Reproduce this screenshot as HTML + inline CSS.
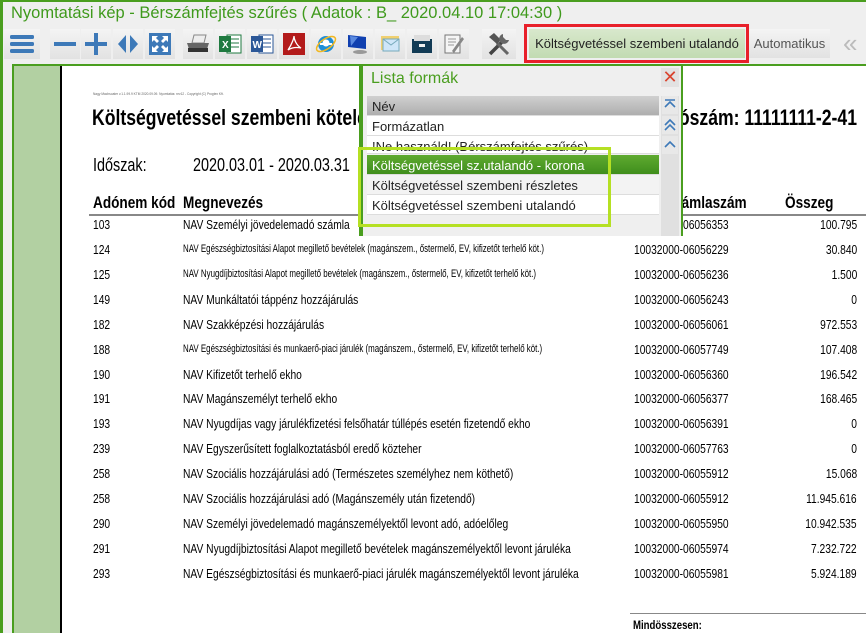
<!DOCTYPE html>
<html><head><meta charset="utf-8"><style>
*{margin:0;padding:0;box-sizing:border-box}
body{width:866px;height:633px;overflow:hidden;background:#efefef;font-family:"Liberation Sans",sans-serif;position:relative}
.abs{position:absolute}
.btn{position:absolute;top:29px;height:30px;width:30px;background:linear-gradient(#f4f4f4,#e2e2e2);display:flex;align-items:center;justify-content:center}
.n{transform:scaleX(.8);transform-origin:0 0;white-space:nowrap}
.nr{transform:scaleX(.8);transform-origin:100% 0;white-space:nowrap}
.row{position:absolute;left:0;width:866px;font-size:12.5px;color:#000;height:16px}
.row span{position:absolute;top:1px;white-space:nowrap;transform:scaleX(.82);transform-origin:0 0}
.c1{left:93px}.c2{left:183px}.c3{left:634px}
.row span.c4{right:9px;transform-origin:100% 0}
.row span.sm{font-size:11px;transform:scaleX(.72)}
.li{position:absolute;left:367px;width:292px;height:20px;font-size:13px;padding:3px 0 0 5px;color:#222;border-bottom:1px solid #ddd;background:#fff;white-space:nowrap}
</style></head><body>
<div class="abs" style="left:0;top:0;width:866px;height:2px;background:#4a9e1f"></div>
<div class="abs" style="left:0;top:0;width:3px;height:633px;background:#4a9e1f"></div>
<div class="abs" style="left:11px;top:4px;font-size:16.5px;color:#3f9a1c">Nyomtatási kép - Bérszámfejtés szűrés ( Adatok : B_ 2020.04.10 17:04:30 )</div>

<div class="btn" style="left:4px;width:36px"><svg width="24" height="20"><rect y="1" width="24" height="4" rx="1.5" fill="#3d79b8"/><rect y="8" width="24" height="4" rx="1.5" fill="#3d79b8"/><rect y="15" width="24" height="4" rx="1.5" fill="#3d79b8"/></svg></div>
<div class="btn" style="left:50px"><svg width="22" height="22"><rect y="9" width="22" height="4" fill="#3d79b8"/></svg></div>
<div class="btn" style="left:81px"><svg width="22" height="22"><rect y="9" width="22" height="4" fill="#3d79b8"/><rect x="9" width="4" height="22" fill="#3d79b8"/></svg></div>
<div class="btn" style="left:113px"><svg width="22" height="22"><path d="M9 2 L1 11 L9 20Z M13 2 L21 11 L13 20Z" fill="#3d79b8"/></svg></div>
<div class="btn" style="left:145px"><svg width="22" height="22"><rect width="22" height="22" fill="#3d79b8"/><path d="M3 3h6l-2 2 3 3-2 2-3-3-2 2z M19 3v6l-2-2-3 3-2-2 3-3-2-2z M3 19v-6l2 2 3-3 2 2-3 3 2 2z M19 19h-6l2-2-3-3 2-2 3 3 2-2z" fill="#fff"/></svg></div>
<div class="btn" style="left:183px"><svg width="24" height="20"><path d="M8 1 L20 1 L18 9 L6 9Z" fill="#eee" stroke="#888"/><path d="M1 9h22l-2 6H3z" fill="#666"/><rect x="2" y="14" width="20" height="4" fill="#333"/></svg></div>
<div class="btn" style="left:215px"><svg width="24" height="22"><rect x="9" y="2" width="14" height="18" fill="#fff" stroke="#1f7a40"/><path d="M12 6h9M12 10h9M12 14h9" stroke="#1f7a40"/><rect x="1" y="3" width="12" height="16" fill="#1f7a40"/><text x="4" y="15" font-size="10" fill="#fff" font-weight="bold">X</text></svg></div>
<div class="btn" style="left:247px"><svg width="24" height="22"><rect x="9" y="2" width="14" height="18" fill="#fff" stroke="#2b5797"/><path d="M12 6h9M12 10h9M12 14h9" stroke="#2b5797"/><rect x="1" y="3" width="12" height="16" fill="#2b5797"/><text x="2.5" y="15" font-size="10" fill="#fff" font-weight="bold">W</text></svg></div>
<div class="btn" style="left:279px"><svg width="22" height="22"><rect width="22" height="22" fill="#b31b1b"/><path d="M5 17 C9 11 11 5 11 3 C11 6 13 12 18 15 C13 14 8 15 5 17Z" fill="none" stroke="#fff" stroke-width="1.3"/></svg></div>
<div class="btn" style="left:311px"><svg width="24" height="24"><circle cx="12" cy="12" r="8" fill="#1f8fd8"/><circle cx="12" cy="11" r="3.5" fill="#fff"/><rect x="6" y="11" width="12" height="2" fill="#fff"/><ellipse cx="12" cy="12" rx="11" ry="5" fill="none" stroke="#f2b820" stroke-width="1.5" transform="rotate(-35 12 12)"/></svg></div>
<div class="btn" style="left:343px"><svg width="24" height="22"><path d="M2 2 L20 4 L20 16 L2 14Z" fill="#1040b0"/><path d="M4 3 L12 4 L5 13Z" fill="#5a8ae0"/><ellipse cx="14" cy="19" rx="7" ry="2" fill="#999"/></svg></div>
<div class="btn" style="left:375px"><svg width="24" height="22"><rect x="3" y="3" width="18" height="14" fill="#f0d070"/><rect x="5" y="6" width="16" height="12" fill="#cfe6f8" stroke="#7ab"/><path d="M5 6l8 6 8-6" fill="none" stroke="#7ab"/></svg></div>
<div class="btn" style="left:407px"><svg width="24" height="22"><path d="M2 6h20v14H2z" fill="#123b55"/><path d="M4 2h16v6H4z" fill="#ddd"/><rect x="9" y="11" width="6" height="3" fill="#eee"/></svg></div>
<div class="btn" style="left:439px"><svg width="22" height="22"><rect x="2" y="2" width="15" height="18" fill="#f5f5f5" stroke="#777"/><path d="M5 6h8M5 9h8M5 12h6" stroke="#999"/><path d="M9 18 L19 4 L21 6 L11 20Z" fill="#888"/></svg></div>
<div class="btn" style="left:482px;width:34px"><svg width="26" height="26"><path d="M4 23 L16 11" stroke="#444" stroke-width="3.5"/><path d="M22 23 L11 12" stroke="#666" stroke-width="3"/><path d="M3 6l5-4 7 7-4 4z" fill="#555"/><path d="M17 3a5 5 0 1 0 6 6l-3 0-3-3z" fill="#666"/></svg></div>

<div class="abs" style="left:524px;top:24px;width:225px;height:39px;border:3px solid #e8202a"></div>
<div class="abs" style="left:529px;top:29px;width:216px;height:29px;background:linear-gradient(#d8e8cc,#c2dbb2);font-size:13px;color:#222;padding-top:7px;text-align:center">Költségvetéssel szembeni utalandó</div>
<div class="abs" style="left:749px;top:29px;width:81px;height:29px;background:linear-gradient(#f4f4f4,#e2e2e2);font-size:13px;color:#555;padding-top:7px;text-align:center">Automatikus</div>
<div class="abs" style="left:843px;top:28px;font-size:26px;color:#bbb;line-height:30px;letter-spacing:-6px">«</div>

<div class="abs" style="left:12px;top:64px;width:854px;height:2px;background:#4a9e1f"></div>
<div class="abs" style="left:12px;top:64px;width:2px;height:569px;background:#4a9e1f"></div>
<div class="abs" style="left:14px;top:66px;width:46px;height:567px;background:#b2d0a2"></div>
<div class="abs" style="left:60px;top:66px;width:2px;height:567px;background:#000"></div>
<div class="abs" style="left:62px;top:66px;width:804px;height:567px;background:#fff"></div>

<div class="abs n" style="left:93px;top:91px;font-size:4px;color:#666">Nagy Machsoater v.1.1.99.9 KTM 2020.09.09. Nyomtatás: rev12 - Copyright (C) Progtex Kft.</div>
<div class="abs n" style="left:92px;top:105px;font-size:22px;font-weight:bold;color:#000">Költségvetéssel szembeni kötelezettségek</div>
<div class="abs nr" style="right:9px;top:105px;font-size:22px;font-weight:bold;color:#000">Adószám: 11111111-2-41</div>
<div class="abs n" style="left:93px;top:155px;font-size:18px;color:#000">Időszak:</div>
<div class="abs n" style="left:193px;top:155px;font-size:18px;color:#000">2020.03.01 - 2020.03.31</div>
<div class="abs n" style="left:93px;top:193px;font-size:17px;font-weight:bold">Adónem kód</div>
<div class="abs n" style="left:183px;top:193px;font-size:17px;font-weight:bold">Megnevezés</div>
<div class="abs n" style="left:634px;top:193px;font-size:17px;font-weight:bold">Bankszámlaszám</div>
<div class="abs n" style="left:785px;top:193px;font-size:17px;font-weight:bold">Összeg</div>
<div class="abs" style="left:89px;top:214px;width:777px;height:2px;background:#888"></div>

<div>
<div class="row" style="top:217px"><span class="c1">103</span><span class="c2">NAV Személyi jövedelemadó számla</span><span class="c3">10032000-06056353</span><span class="c4">100.795</span></div>
<div class="row" style="top:242px"><span class="c1">124</span><span class="c2 sm">NAV Egészségbiztosítási Alapot megillető bevételek (magánszem., őstermelő, EV, kifizetőt terhelő köt.)</span><span class="c3">10032000-06056229</span><span class="c4">30.840</span></div>
<div class="row" style="top:267px"><span class="c1">125</span><span class="c2 sm">NAV Nyugdíjbiztosítási Alapot megillető bevételek (magánszem., őstermelő, EV, kifizetőt terhelő köt.)</span><span class="c3">10032000-06056236</span><span class="c4">1.500</span></div>
<div class="row" style="top:292px"><span class="c1">149</span><span class="c2">NAV Munkáltatói táppénz hozzájárulás</span><span class="c3">10032000-06056243</span><span class="c4">0</span></div>
<div class="row" style="top:317px"><span class="c1">182</span><span class="c2">NAV Szakképzési hozzájárulás</span><span class="c3">10032000-06056061</span><span class="c4">972.553</span></div>
<div class="row" style="top:342px"><span class="c1">188</span><span class="c2 sm">NAV Egészségbiztosítási és munkaerő-piaci járulék (magánszem., őstermelő, EV, kifizetőt terhelő köt.)</span><span class="c3">10032000-06057749</span><span class="c4">107.408</span></div>
<div class="row" style="top:367px"><span class="c1">190</span><span class="c2">NAV Kifizetőt terhelő ekho</span><span class="c3">10032000-06056360</span><span class="c4">196.542</span></div>
<div class="row" style="top:391px"><span class="c1">191</span><span class="c2">NAV Magánszemélyt terhelő ekho</span><span class="c3">10032000-06056377</span><span class="c4">168.465</span></div>
<div class="row" style="top:416px"><span class="c1">193</span><span class="c2">NAV Nyugdíjas vagy járulékfizetési felsőhatár túllépés esetén fizetendő ekho</span><span class="c3">10032000-06056391</span><span class="c4">0</span></div>
<div class="row" style="top:441px"><span class="c1">239</span><span class="c2">NAV Egyszerűsített foglalkoztatásból eredő közteher</span><span class="c3">10032000-06057763</span><span class="c4">0</span></div>
<div class="row" style="top:466px"><span class="c1">258</span><span class="c2">NAV Szociális hozzájárulási adó (Természetes személyhez nem köthető)</span><span class="c3">10032000-06055912</span><span class="c4">15.068</span></div>
<div class="row" style="top:491px"><span class="c1">258</span><span class="c2">NAV Szociális hozzájárulási adó (Magánszemély után fizetendő)</span><span class="c3">10032000-06055912</span><span class="c4">11.945.616</span></div>
<div class="row" style="top:516px"><span class="c1">290</span><span class="c2">NAV Személyi jövedelemadó magánszemélyektől levont adó, adóelőleg</span><span class="c3">10032000-06055950</span><span class="c4">10.942.535</span></div>
<div class="row" style="top:541px"><span class="c1">291</span><span class="c2">NAV Nyugdíjbiztosítási Alapot megillető bevételek magánszemélyektől levont járuléka</span><span class="c3">10032000-06055974</span><span class="c4">7.232.722</span></div>
<div class="row" style="top:566px"><span class="c1">293</span><span class="c2">NAV Egészségbiztosítási és munkaerő-piaci járulék magánszemélyektől levont járuléka</span><span class="c3">10032000-06055981</span><span class="c4">5.924.189</span></div>
</div>
<div class="abs" style="left:630px;top:613px;width:236px;height:1px;background:#888"></div>
<div class="abs n" style="left:633px;top:618px;font-size:12px;font-weight:bold">Mindösszesen:</div>

<div class="abs" style="left:359px;top:66px;width:324px;height:170px;background:#efefef;border-left:4px solid #4a9e1f;border-right:2px solid #4a9e1f"></div>
<div class="abs" style="left:371px;top:70px;font-size:16px;color:#4a9e1f">Lista formák</div>
<div class="abs" style="left:661px;top:68px;width:18px;height:19px;background:#e2e2e2;color:#d9442f;font-size:18px;line-height:18px;text-align:center">✕</div>
<div class="abs" style="left:661px;top:96px;width:18px;height:140px;background:#e0e0e0"></div>
<div class="abs" style="left:662px;top:96px;width:16px;height:18px;background:#e8e8e8"><svg width="16" height="18"><path d="M3 4h10M3 11l5-5 5 5" fill="none" stroke="#3d79b8" stroke-width="1.6"/></svg></div>
<div class="abs" style="left:662px;top:116px;width:16px;height:18px;background:#e8e8e8"><svg width="16" height="18"><path d="M3 9l5-5 5 5M3 14l5-5 5 5" fill="none" stroke="#3d79b8" stroke-width="1.6"/></svg></div>
<div class="abs" style="left:662px;top:136px;width:16px;height:18px;background:#e8e8e8"><svg width="16" height="18"><path d="M3 11l5-5 5 5" fill="none" stroke="#3d79b8" stroke-width="1.6"/></svg></div>
<div class="li" style="top:96px;background:linear-gradient(#d0d0d0,#aeaeae)">Név</div>
<div class="li" style="top:116px">Formázatlan</div>
<div class="li" style="top:136px;height:18px">!Ne használd! (Bérszámfejtés szűrés)</div>
<div class="li" style="top:155px;background:linear-gradient(#5faa30,#3f8e1c);color:#fff">Költségvetéssel sz.utalandó - korona</div>
<div class="li" style="top:175px;background:#f3f3f3">Költségvetéssel szembeni részletes</div>
<div class="li" style="top:195px">Költségvetéssel szembeni utalandó</div>
<div class="li" style="top:215px;background:#efefef;border:none"></div>
<div class="abs" style="left:358px;top:147px;width:253px;height:80px;border:3px solid #b5e023"></div>
</body></html>
